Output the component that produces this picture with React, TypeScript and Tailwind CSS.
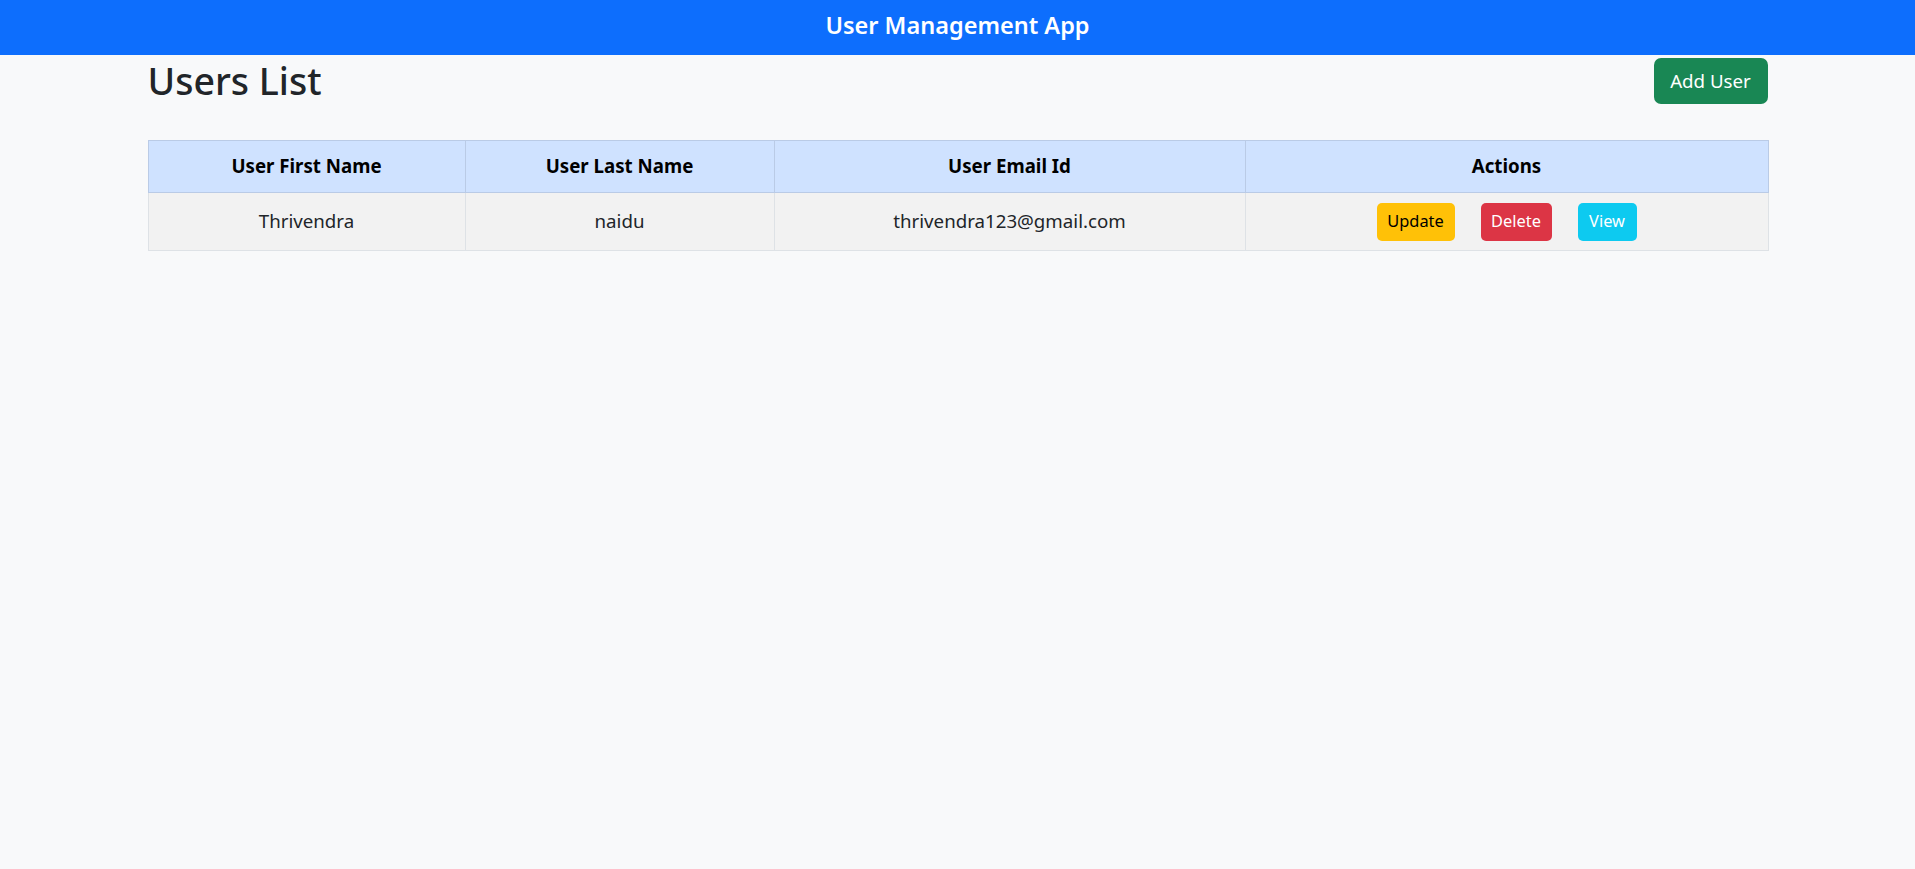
const users = [
  { id: 1, firstName: 'Thrivendra', lastName: 'naidu', email: 'thrivendra123@gmail.com' },
];

export default function App() {
  return (
    <div className="min-h-[869px] bg-[#f8f9fa] text-[18.7px] text-[#212529] font-['Segoe_UI','Noto_Sans',sans-serif]">
      <header className="flex h-[55px] items-center justify-center bg-[#0d6efd] pb-[3px]">
        <h1 className="text-[23.5px] font-semibold leading-none text-white">User Management App</h1>
      </header>

      <main className="mx-auto w-[1620px]">
        <div className="flex items-start justify-between pt-[3px]">
          <h2 className="text-[37.5px] font-medium leading-[46px]">Users List</h2>
          <button className="h-[46px] w-[114px] rounded-[7px] bg-[#198754] text-[18.7px] text-white">
            Add User
          </button>
        </div>

        <table className="mt-[36px] w-full table-fixed border-collapse text-center">
          <colgroup>
            <col className="w-[317px]" />
            <col className="w-[309px]" />
            <col className="w-[471px]" />
            <col className="w-[523px]" />
          </colgroup>
          <thead>
            <tr className="h-[52px] bg-[#cfe2ff] text-black">
              <th className="border border-[#bacbe6] font-bold">User First Name</th>
              <th className="border border-[#bacbe6] font-bold">User Last Name</th>
              <th className="border border-[#bacbe6] font-bold">User Email Id</th>
              <th className="border border-[#bacbe6] font-bold">Actions</th>
            </tr>
          </thead>
          <tbody>
            {users.map((u) => (
              <tr key={u.id} className="h-[58px] bg-[#f2f2f2]">
                <td className="border border-[#dee2e6]">{u.firstName}</td>
                <td className="border border-[#dee2e6]">{u.lastName}</td>
                <td className="border border-[#dee2e6]">{u.email}</td>
                <td className="border border-[#dee2e6]">
                  <div className="flex items-center justify-center gap-[26px] text-[16.4px]">
                    <button className="h-[38px] w-[78px] rounded-[5px] bg-[#ffc107] text-black">Update</button>
                    <button className="h-[38px] w-[71px] rounded-[5px] bg-[#dc3545] text-white">Delete</button>
                    <button className="h-[38px] w-[59px] rounded-[5px] bg-[#0dcaf0] text-white">View</button>
                  </div>
                </td>
              </tr>
            ))}
          </tbody>
        </table>
      </main>
    </div>
  );
}
